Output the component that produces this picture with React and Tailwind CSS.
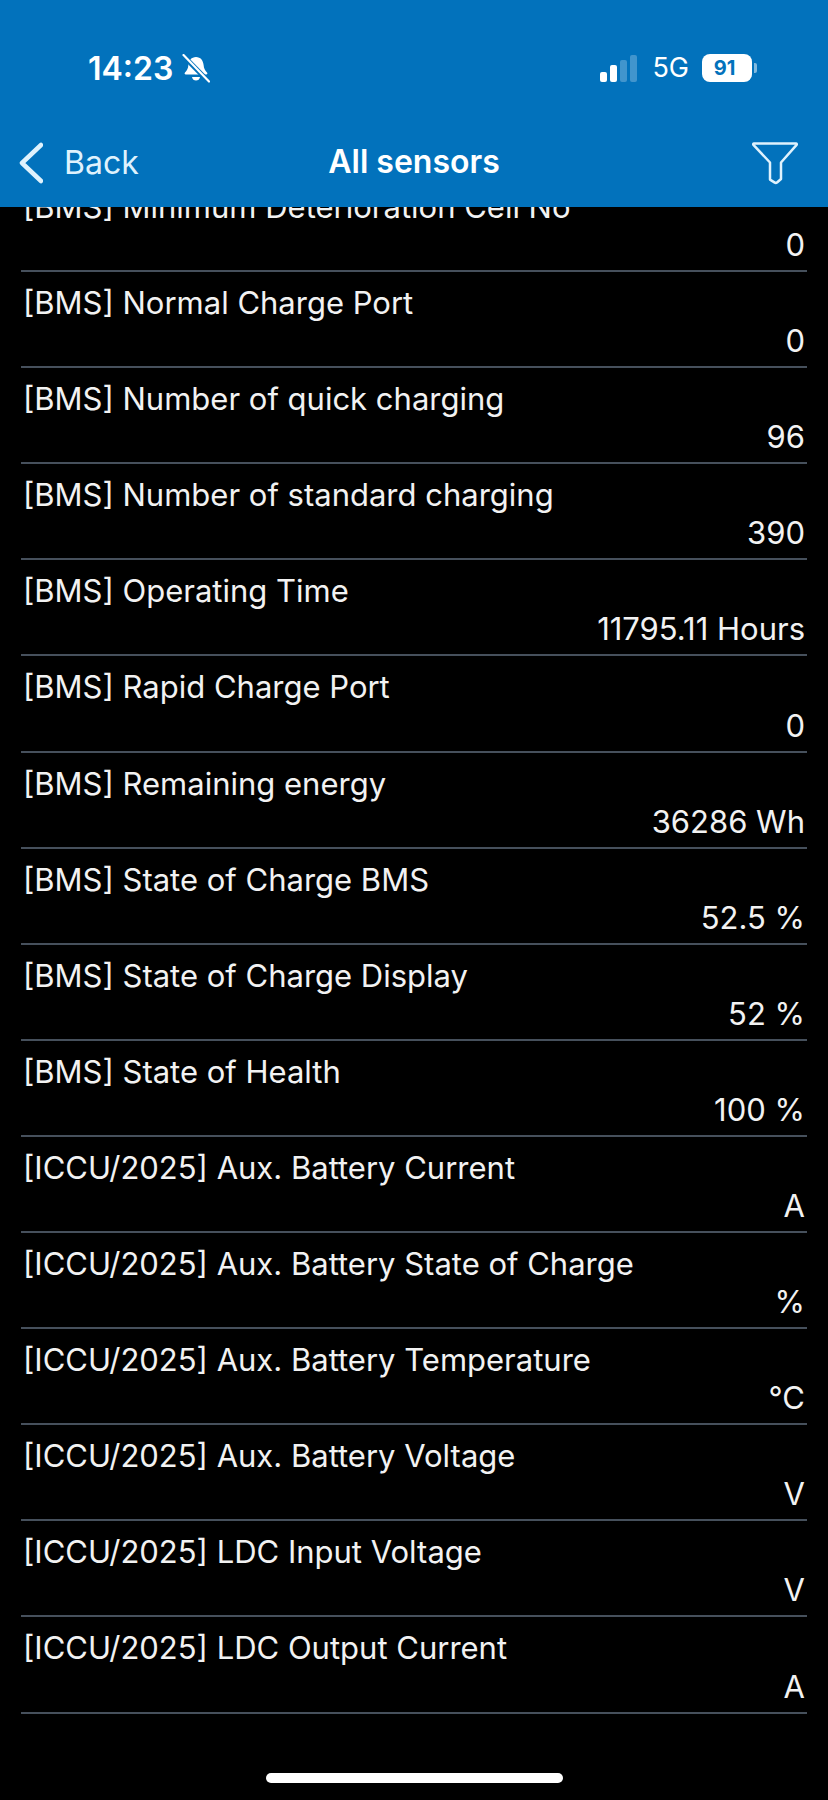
const rows = [
  ["[BMS] Minimum Deterioration Cell No", "0"],
  ["[BMS] Normal Charge Port", "0"],
  ["[BMS] Number of quick charging", "96"],
  ["[BMS] Number of standard charging", "390"],
  ["[BMS] Operating Time", "11795.11 Hours"],
  ["[BMS] Rapid Charge Port", "0"],
  ["[BMS] Remaining energy", "36286 Wh"],
  ["[BMS] State of Charge BMS", "52.5 %"],
  ["[BMS] State of Charge Display", "52 %"],
  ["[BMS] State of Health", "100 %"],
  ["[ICCU/2025] Aux. Battery Current", "A"],
  ["[ICCU/2025] Aux. Battery State of Charge", "%"],
  ["[ICCU/2025] Aux. Battery Temperature", "°C"],
  ["[ICCU/2025] Aux. Battery Voltage", "V"],
  ["[ICCU/2025] LDC Input Voltage", "V"],
  ["[ICCU/2025] LDC Output Current", "A"],
];

function BellSlash() {
  return (
    <svg width="28" height="30" viewBox="0 0 28 30" className="ml-[9px]">
      <path d="M14 3c4.6 0 7.2 3.6 7.6 8 .3 3.600 1.400 5.500 3.400 7.500.8.800.4 2-.8 2H3.800c-1.200 0-1.600-1.200-.8-2 2-2 3.100-3.900 3.400-7.500C6.800 6.600 9.400 3 14 3z" fill="#fff" />
      <path d="M10 23h8c-.4 2.400-2 3.500-4 3.500s-3.600-1.100-4-3.500z" fill="#fff" />
      <path d="M1 1.500 27 28" stroke="#0272bc" strokeWidth="5" />
      <path d="M1.500 1 27 27.500" stroke="#fff" strokeWidth="2.200" strokeLinecap="round" />
    </svg>
  );
}

function Signal() {
  return (
    <div className="flex items-end gap-[3px] h-[27px]">
      <div className="w-[7px] h-[10px] rounded-[2px] bg-white" />
      <div className="w-[7px] h-[17px] rounded-[2px] bg-white" />
      <div className="w-[7px] h-[22px] rounded-[2px] bg-white/25" />
      <div className="w-[7px] h-[27px] rounded-[2px] bg-white/25" />
    </div>
  );
}

function Battery() {
  return (
    <div className="flex items-center">
      <div className="w-[50px] h-[28px] rounded-[8px] bg-white overflow-hidden flex">
        <div className="w-[45px] h-full flex items-center justify-center text-[#0272bc] text-[20px] font-bold leading-none">91</div>
        <div className="flex-1 bg-white/50" />
      </div>
      <div className="ml-[2px] w-[3px] h-[10px] rounded-r-[2px] bg-white/50" />
    </div>
  );
}

export default function App() {
  return (
    <div className="w-[828px] h-[1800px] bg-black flex flex-col overflow-hidden font-['Inter',sans-serif] text-white">
      <header className="h-[207px] shrink-0 bg-[#0272bc] flex flex-col z-10">
        <div className="h-[136px] flex items-start">
          <div className="flex items-center mt-[50px] ml-[88px]">
            <span className="text-[32px] font-semibold leading-[38px]">14:23</span>
            <BellSlash />
          </div>
          <div className="flex items-center ml-auto mr-[71px] mt-[53px]">
            <Signal />
            <span className="ml-[15px] text-[27px] leading-[30px]">5G</span>
            <div className="ml-[13px]"><Battery /></div>
          </div>
        </div>
        <div className="flex-1 relative flex items-start">
          <div className="flex items-center ml-[19px] mt-[6px]">
            <svg width="24" height="42" viewBox="0 0 24 42" fill="none">
              <path d="M22 3 3 21l19 18" stroke="#dff2fd" strokeWidth="4.500" strokeLinecap="round" strokeLinejoin="round" />
            </svg>
            <span className="ml-[21px] text-[32px] leading-[40px] text-[#dff2fd]">Back</span>
          </div>
          <span className="absolute left-0 right-0 top-[6px] text-center text-[32px] font-semibold leading-[40px]">All sensors</span>
          <svg className="ml-auto mr-[30px] mt-[5px]" width="46" height="44" viewBox="0 0 46 44" fill="none">
            <path d="M2 2.500h42c.8 0 1 .8.600 1.300L29 21.500V38l-4 3.500c-.8.500-1.500.500-2.200.1l-4.800-3V21.500L1.400 3.800C1 3.300 1.200 2.500 2 2.500z" stroke="#dff2fd" strokeWidth="2.500" strokeLinejoin="round" />
          </svg>
        </div>
      </header>
      <main className="flex-1 overflow-hidden">
        <div className="-mt-[31px] mx-[21px]">
          {rows.map(([label, value]) => (
            <div key={label} className="h-[96.1px] border-b-2 border-[#46505c] flex flex-col px-[2px]">
              <div className="text-[31px] leading-[37px] mt-[12px] text-[#f2f2f2] whitespace-nowrap">{label}</div>
              <div className="text-[31px] leading-[37px] mt-auto mb-[7px] text-right text-[#f2f2f2] pr-0">{value}</div>
            </div>
          ))}
        </div>
      </main>
      <div className="absolute left-[266px] top-[1773px] w-[297px] h-[10px] rounded-full bg-white" />
    </div>
  );
}
